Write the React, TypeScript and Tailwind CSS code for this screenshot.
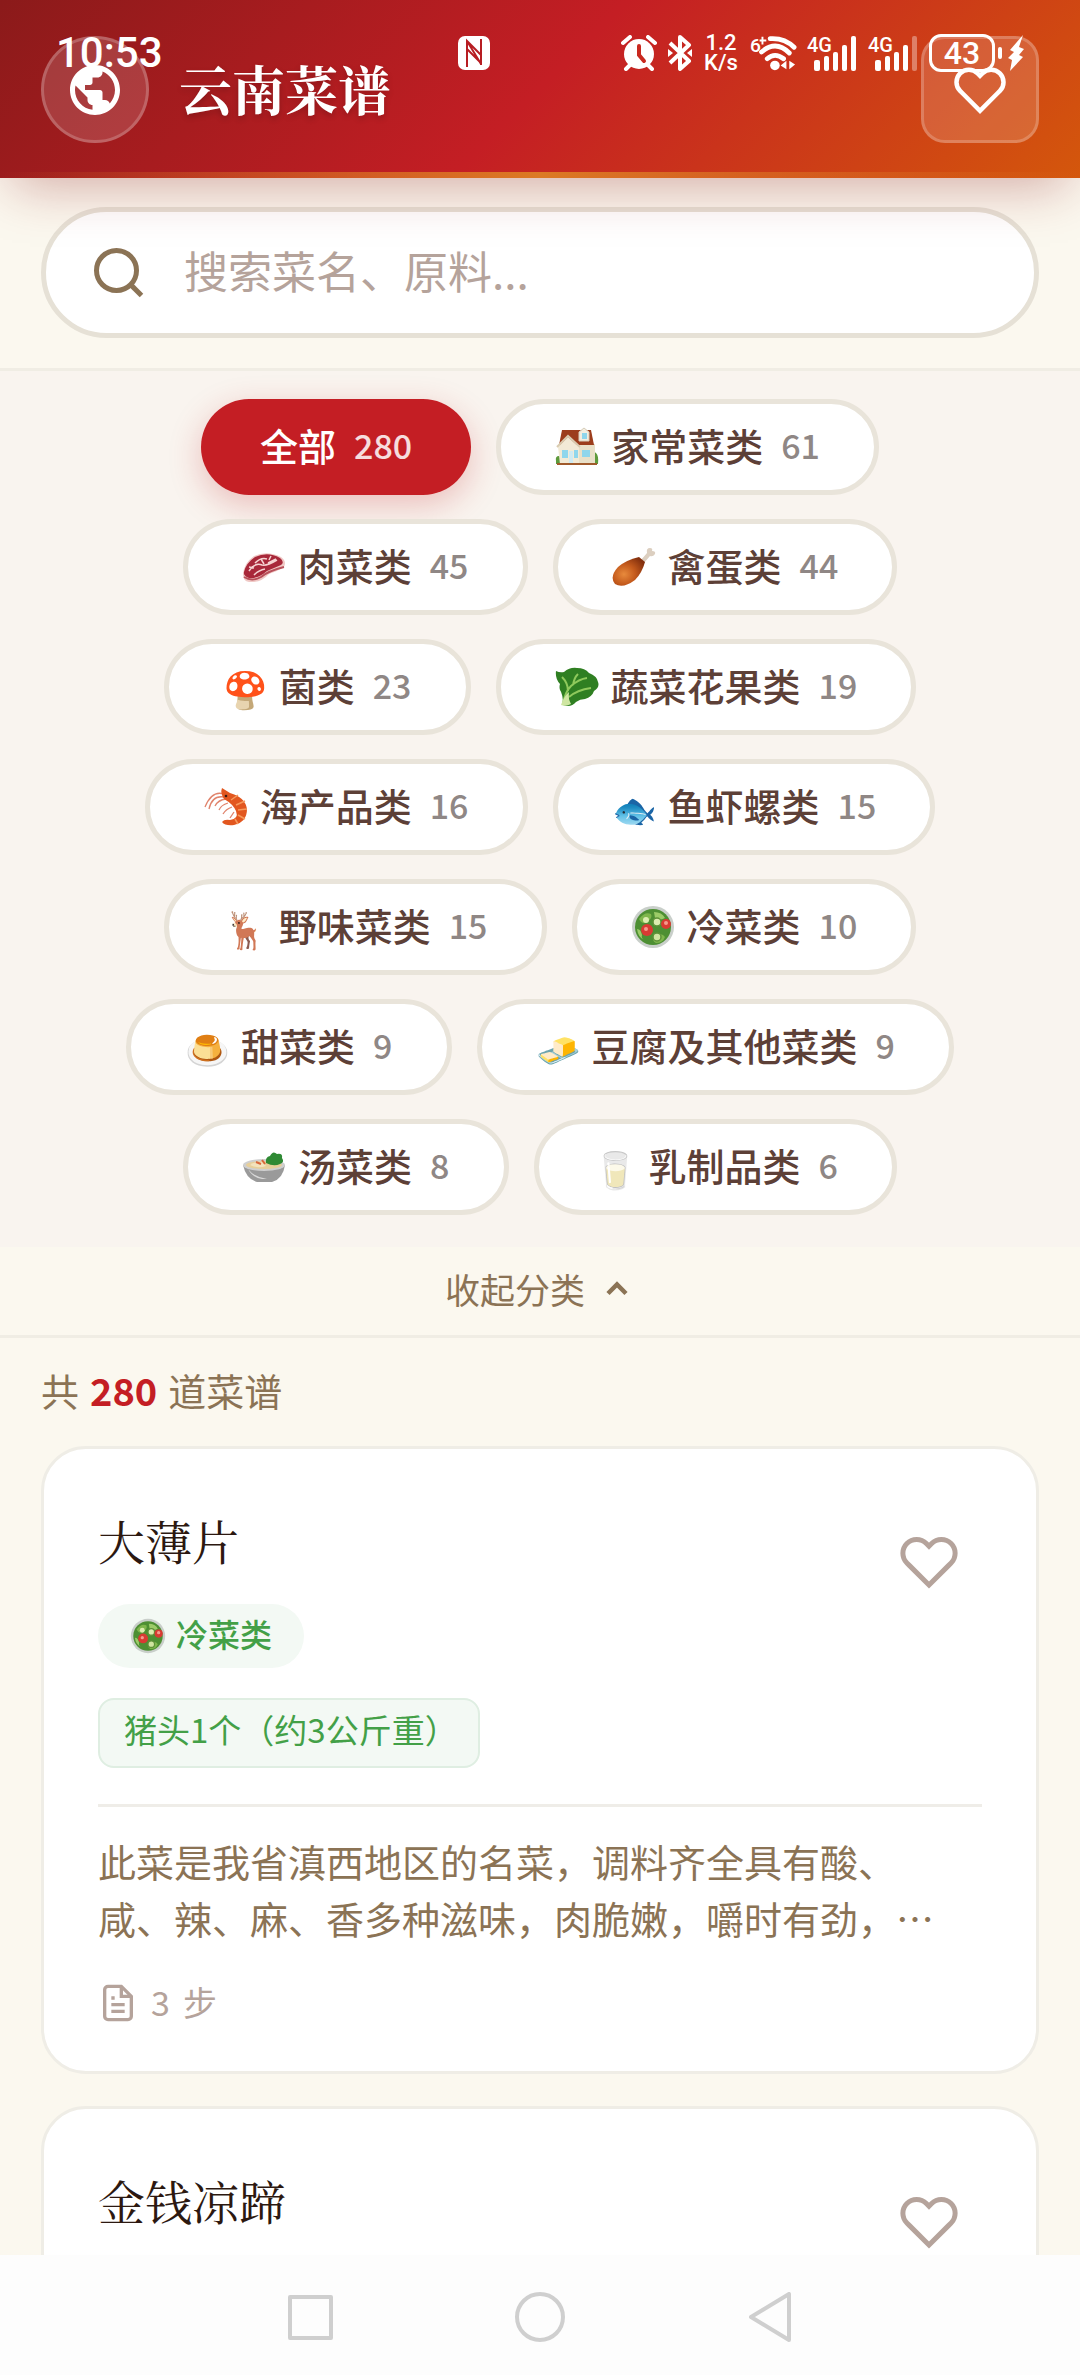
import type { ReactNode } from 'react';
import { MdPublic } from 'react-icons/md';

function HouseArt() {
  return (
    <svg viewBox="0 0 44 40" className="h-10 w-11" aria-hidden="true">
      <path d="M1 34q-1-5 3-5 2 0 3 3h30q1-9 4-6 3 3 2 11H1z" fill="#5d9a3c" />
      <rect x="6" y="17" width="34" height="20" fill="#e9e0c8" />
      <path d="M7 3h29l3 15H4z" fill="#9c3d1c" />
      <path d="M3 20L13 10l11 10v17H5z" fill="#f2ead6" />
      <path d="M2 20L13 9l12 11" fill="none" stroke="#d9cbb0" strokeWidth="2" />
      <path d="M24 14V5l5-4 5 4v9z" fill="#f4eee0" stroke="#d6ccb8" />
      <path d="M27 6h5v6h-5zM7 23h6v8H7zM19 23h4v8h-4zM27 23h8v7h-8z" fill="#8fd6ec" />
      <path d="M14 24h4v12h-4z" fill="#cfeaf2" />
      <path d="M2 36h40v2H2z" fill="#a05a2c" />
    </svg>
  );
}

function MeatArt() {
  return (
    <svg viewBox="0 0 44 40" className="h-10 w-11" aria-hidden="true">
      <path d="M1 27Q2 16 12 9 25 3 39 10q6 4 3 10-6 4-15 7-8 9-20 8-6-1-6-8z" fill="#f0c9c6" />
      <path d="M2 25Q4 16 13 10 26 4 38 11q5 4 1 7-7 3-14 6-9 8-18 7-6-2-5-6z" fill="#a8283a" />
      <path d="M7 24q6-9 13-6 5 1 15-5M12 28q5-5 11-6M13 16q6-6 12-4M26 16l8-4M7 20l5 1M19 12l3 5M29 9l-2 4" fill="none" stroke="#f6d3d2" strokeWidth="1.5" />
      <path d="M2 30q8 5 17 0 7-6 23-10" fill="none" stroke="#b8505a" strokeWidth="2" />
    </svg>
  );
}

function DrumstickArt() {
  return (
    <svg viewBox="0 0 44 40" className="h-10 w-11" aria-hidden="true">
      <defs>
        <radialGradient id="drum" cx="0.35" cy="0.6" r="0.7">
          <stop offset="0" stopColor="#e88a3c" />
          <stop offset="0.5" stopColor="#c45a1c" />
          <stop offset="1" stopColor="#84300e" />
        </radialGradient>
      </defs>
      <path d="M29 13l6-7q-1-5 3-5 3 0 2 3 4 0 3 3-2 3-5 2l-6 7z" fill="#dccfc0" />
      <path d="M3 37Q-3 30 6 20 14 13 27 10l6 5q-3 11-10 18-12 9-20 4z" fill="url(#drum)" />
    </svg>
  );
}

function GreensArt() {
  return (
    <svg viewBox="0 0 44 40" className="h-10 w-11" aria-hidden="true">
      <path d="M8 38q0-11-3-15-1-3 0-6-5-5-4-13 4 2 8 1 6-5 13-4 8 0 12 5 8 3 9 9 2 5-4 9-2 6-9 8-5 0-9 3-5 6-13 3z" fill="#2f7f22" />
      <path d="M8 37q2-12 8-18 8-7 16-8M13 24q0-8-6-14M14 30q8-7 22-9M18 18q1-7 5-11" fill="none" stroke="#8fc95c" strokeWidth="2" />
      <path d="M6 38q3-9 8-13-1 7 2 12-5 3-10 1z" fill="#cfe6a2" />
    </svg>
  );
}

function ShrimpArt() {
  return (
    <svg viewBox="0 0 44 40" className="h-10 w-11" aria-hidden="true">
      <path d="M20 7Q8 3 1 20M20 10Q8 8 5 22M22 12q-8 1-11 7M24 16q-7 2-9 7M28 20q-6 2-9 7M30 25l-4 6" fill="none" stroke="#e0836b" strokeWidth="1.3" />
      <path d="M18 1l8 5q15 4 17 16 0 13-13 16-9 1-12-3 2-3 8-2 9-1 6-9-3-7-12-12-4-6-2-11z" fill="#e2571f" />
      <path d="M27 13l7-5M32 18l9-4M34 23l9-1M34 28l7 4M31 32l3 5" fill="none" stroke="#f79a5c" strokeWidth="1.5" />
      <circle cx="22" cy="9" r="1.3" fill="#3a1a10" />
    </svg>
  );
}

function SaladArt({ className = 'h-11 w-11' }: { className?: string }) {
  return (
    <svg viewBox="0 0 44 44" className={className} aria-hidden="true">
      <circle cx="22" cy="22" r="21" fill="#c9cfca" />
      <circle cx="22" cy="22" r="18" fill="#4d8f33" />
      <path d="M8 14q6-8 12-5 2 4-4 8-5 3-8-3zM24 31q7-4 10 1-2 6-9 6-5-2-1-7z" fill="#7eb64c" />
      <path d="M23 7q8 0 11 6-6 3-10 0zM6 24q4 0 5 6-1 3 2 5-6-3-7-11z" fill="#9ccb68" />
      <circle cx="26" cy="17" r="4" fill="#dcedb0" stroke="#5d9138" strokeWidth="1.5" />
      <circle cx="26" cy="32" r="4" fill="#cfe4a0" stroke="#5d9138" strokeWidth="1.5" />
      <circle cx="15" cy="15" r="3" fill="#dcedb0" />
      <circle cx="16" cy="25" r="6" fill="#d93a33" />
      <circle cx="35" cy="19" r="5" fill="#d93a33" />
      <circle cx="15" cy="24" r="2" fill="#f59a8c" />
      <circle cx="35" cy="18" r="2" fill="#f59a8c" />
    </svg>
  );
}

function SoupArt() {
  return (
    <svg viewBox="0 0 44 40" className="h-10 w-11" aria-hidden="true">
      <path d="M1 18h42q-2 14-13 17H15Q4 32 1 18z" fill="#9a9a9a" />
      <path d="M6 22q5 9 14 10h5Q12 30 6 22z" fill="#d9d9d9" />
      <ellipse cx="22" cy="18" rx="21" ry="6" fill="#cfcfcf" />
      <ellipse cx="22" cy="18" rx="18" ry="4" fill="#e7cf9a" />
      <path d="M8 18q5-4 12-3l4 4q-8 3-16-1z" fill="#f3e3bd" />
      <path d="M14 15l5 2M20 13l3 4" stroke="#d9673a" strokeWidth="2" />
      <path d="M24 16q-1-6 4-7 3-6 7-2 6-1 5 4 3 4-2 6-6 3-14-1z" fill="#2f8a34" />
    </svg>
  );
}

function Emoji({ char }: { char: string }) {
  return <span className="w-11 text-center text-[36px] leading-none">{char}</span>;
}

type Category = { name: string; count: number; art?: ReactNode };

const categories: Category[] = [
  { name: '全部', count: 280 },
  { name: '家常菜类', count: 61, art: <HouseArt /> },
  { name: '肉菜类', count: 45, art: <MeatArt /> },
  { name: '禽蛋类', count: 44, art: <DrumstickArt /> },
  { name: '菌类', count: 23, art: <Emoji char="🍄" /> },
  { name: '蔬菜花果类', count: 19, art: <GreensArt /> },
  { name: '海产品类', count: 16, art: <ShrimpArt /> },
  { name: '鱼虾螺类', count: 15, art: <Emoji char="🐟" /> },
  { name: '野味菜类', count: 15, art: <Emoji char="🦌" /> },
  { name: '冷菜类', count: 10, art: <SaladArt /> },
  { name: '甜菜类', count: 9, art: <Emoji char="🍮" /> },
  { name: '豆腐及其他菜类', count: 9, art: <Emoji char="🧈" /> },
  { name: '汤菜类', count: 8, art: <SoupArt /> },
  { name: '乳制品类', count: 6, art: <Emoji char="🥛" /> },
];

const recipes = [
  {
    name: '大薄片',
    category: '冷菜类',
    ingredient: '猪头1个（约3公斤重）',
    description: '此菜是我省滇西地区的名菜，调料齐全具有酸、咸、辣、麻、香多种滋味，肉脆嫩，嚼时有劲，…',
    steps: 3,
  },
  { name: '金钱凉蹄' },
];

function HeartIcon({ className }: { className: string }) {
  return (
    <svg viewBox="0 0 24 24" className={className} fill="none" stroke="currentColor" strokeWidth="2" aria-hidden="true">
      <path d="M20.84 4.61a5.5 5.5 0 0 0-7.78 0L12 5.67l-1.06-1.06a5.5 5.5 0 0 0-7.78 7.78l1.06 1.06L12 21.23l7.78-7.78 1.06-1.06a5.5 5.5 0 0 0 0-7.78z" />
    </svg>
  );
}

function Signal({ weak }: { weak?: boolean }) {
  return (
    <svg viewBox="0 0 50 36" className="h-9 w-[50px] overflow-visible" fill="currentColor" aria-hidden="true">
      <text x="0" y="17" fontSize="20" fontWeight="500">4G</text>
      <rect x="7" y="25" width="6" height="11" rx="2" />
      <rect x="17" y="21" width="5" height="15" rx="2" />
      <rect x="26" y="17" width="5" height="19" rx="2" />
      <rect x="35" y="10" width="5" height="26" rx="2" />
      <rect x="44" y="1" width="5" height="35" rx="2" opacity={weak ? 0.35 : 1} />
    </svg>
  );
}

function StatusBar() {
  return (
    <div className="pointer-events-none absolute inset-x-0 top-[35px] flex h-9 items-center pr-14 pl-14 font-['Roboto',sans-serif] text-white">
      <span className="text-[42px] leading-[50px] font-medium">10:53</span>
      <svg viewBox="0 0 32 34" className="ml-[295px] h-[34px] w-8" aria-hidden="true">
        <rect width="32" height="34" rx="7" fill="currentColor" />
        <path d="M9 31V5l14 14M9 13l14 14M23 3v26M9 5l14 23" fill="none" stroke="#b71d22" strokeWidth="2" />
      </svg>
      <div className="ml-auto flex items-center gap-[11px]">
        <svg viewBox="0 0 36 36" className="h-9 w-9" fill="none" stroke="currentColor" aria-hidden="true">
          <circle cx="18" cy="19" r="15" fill="currentColor" stroke="none" />
          <path d="M2 8l7-6M34 8l-7-6M5 34l5-5M31 34l-5-5" strokeWidth="4" strokeLinecap="round" />
          <path d="M18 11v9l5 6" stroke="#c9291f" strokeWidth="4" strokeLinecap="round" />
        </svg>
        <svg viewBox="0 0 24 36" className="h-9 w-6" fill="none" stroke="currentColor" strokeWidth="4" aria-hidden="true">
          <path d="M2 8l19 18-9 8V2l9 8L2 28" strokeLinejoin="round" />
          <path d="M0 14l5 4-5 4zM24 14l-5 4 5 4z" fill="currentColor" stroke="none" />
        </svg>
        <p className="w-9 text-center text-[22px] leading-5 font-medium">
          1.2
          <br />
          K/s
        </p>
        <svg viewBox="0 0 48 36" className="h-9 w-[46px] overflow-visible" fill="none" stroke="currentColor" aria-hidden="true">
          <text x="0" y="17" fontSize="20" fontWeight="500" fill="currentColor" stroke="none">6</text>
          <path d="M10 5h7M13 1v8" strokeWidth="2" />
          <path d="M21 3q15-1 25 9M12 17q15-13 29 1M18 24q8-7 17 0" strokeWidth="5" strokeLinecap="round" />
          <circle cx="26" cy="31" r="5" fill="currentColor" stroke="none" />
          <path d="M38 26v9l-6-4zM41 26v9l6-5z" fill="currentColor" stroke="none" />
        </svg>
        <Signal />
        <Signal weak />
        <div className="flex items-center gap-1.5">
          <div className="flex items-center gap-[3px]">
            <span className="flex h-[38px] w-[66px] items-center justify-center rounded-xl border-[3px] border-white text-[32px] leading-none font-medium">
              43
            </span>
            <span className="h-3 w-1 rounded-sm bg-white" />
          </div>
          <svg viewBox="0 0 16 36" className="h-9 w-4" fill="currentColor" aria-hidden="true">
            <path d="M15 0L2 15l4 2-6 6 4 2-2 11 13-14-4-2 5-6-5-2z" />
          </svg>
        </div>
      </div>
    </div>
  );
}

function Header() {
  return (
    <header className="relative z-10 bg-[linear-gradient(135deg,#8b1a1a_0%,#c41e24_50%,#d4570c_100%)] shadow-[0_20px_50px_-12px_rgba(139,26,26,0.35)]">
      <div className="flex items-center px-[41px] pt-9 pb-[29px]">
        <button aria-label="语言" className="flex h-[107px] w-[108px] items-center justify-center rounded-full border-[3px] border-white/20 bg-white/15 text-white">
          <MdPublic className="h-[60px] w-[60px]" />
        </button>
        <h1 className="ml-[30px] pb-1 font-['Noto_Serif_CJK_SC','Noto_Sans_CJK_SC',serif] text-[53px] leading-[76px] font-bold text-white [text-shadow:0_3px_6px_rgba(0,0,0,0.2)]">
          云南菜谱
        </h1>
        <button aria-label="我的收藏" className="ml-auto flex h-[107px] w-[118px] items-center justify-center rounded-3xl border-[3px] border-white/20 bg-white/15 text-white">
          <HeartIcon className="h-[54px] w-[54px]" />
        </button>
      </div>
      <div className="h-1.5 bg-[linear-gradient(90deg,transparent,#dc7a24_50%,transparent)]" />
      <StatusBar />
    </header>
  );
}

function CategoryChip({ category, active }: { category: Category; active: boolean }) {
  return (
    <button
      aria-pressed={active}
      className={
        active
          ? "flex h-24 items-center rounded-full bg-[#c41e24] px-[59px] font-['Noto_Sans_CJK_SC_Medium','Noto_Sans_CJK_SC',sans-serif] text-white shadow-[0_10px_32px_rgba(196,30,36,0.25)]"
          : "flex h-24 items-center rounded-full border-[5px] border-[#e9e4da] bg-white px-[54px] font-['Noto_Sans_CJK_SC_Medium','Noto_Sans_CJK_SC',sans-serif] text-[#5d4037]"
      }
    >
      {category.art && <span className="mr-3 flex">{category.art}</span>}
      <span className="pb-1 text-[38px] leading-[56px]">{category.name}</span>
      <span className={active ? 'ml-[18px] pb-1.5 text-[34px] text-white/85' : 'ml-[18px] pb-1.5 text-[34px] text-[#8f8785]'}>{category.count}</span>
    </button>
  );
}

function RecipeCard({ recipe }: { recipe: (typeof recipes)[number] }) {
  return (
    <article className="rounded-[45px] border-[3px] border-[#efede6] bg-white px-[54px] pt-[53px] pb-11">
      <div className="flex items-start justify-between">
        <div>
          <h2 className="mb-[26px] font-['Noto_Serif_CJK_SC','Noto_Sans_CJK_SC',serif] text-[47px] leading-[76px] text-[#2c1810]">{recipe.name}</h2>
          {recipe.category && (
            <span className="flex h-16 w-fit items-center gap-2.5 rounded-full bg-[#f3f9f4] px-8 font-['Noto_Sans_CJK_SC_Medium','Noto_Sans_CJK_SC',sans-serif] text-[32px] text-[#43a047]">
              <SaladArt className="h-9 w-9" />
              <span className="pb-1.5">{recipe.category}</span>
            </span>
          )}
        </div>
        <button aria-label="收藏" className="flex h-[120px] w-[106px] items-center justify-center text-[#b5a39b]">
          <HeartIcon className="h-[60px] w-[60px]" />
        </button>
      </div>
      {recipe.ingredient && (
        <span className="mt-[30px] flex h-[70px] w-fit items-center rounded-2xl border-2 border-[#dfeee2] bg-[#f3f9f4] pr-5 pb-1.5 pl-6 text-[33px] text-[#43a047]">
          {recipe.ingredient}
        </span>
      )}
      {recipe.description && (
        <div className="mt-9 border-t-[3px] border-[#efede8] pt-[25px] pr-4">
          <p className="line-clamp-2 text-[38px] leading-[57px] text-[#8b7355]">{recipe.description}</p>
        </div>
      )}
      {recipe.steps && (
        <div className="mt-[33px] flex h-12 items-center gap-[13px] text-[34px] text-[#b5a39b]">
          <svg viewBox="0 0 24 24" className="h-10 w-10" fill="none" stroke="currentColor" strokeWidth="2" aria-hidden="true">
            <path d="M14 2H6a2 2 0 0 0-2 2v16a2 2 0 0 0 2 2h12a2 2 0 0 0 2-2V8z" />
            <path d="M14 2v6h6M16 13H8M16 17H8M10 9H8" />
          </svg>
          <span className="pb-1">{recipe.steps}</span>
          <span className="pb-1">步</span>
        </div>
      )}
    </article>
  );
}

function SystemNav() {
  return (
    <nav className="relative z-10 flex h-[120px] shrink-0 items-center justify-center gap-[170px] bg-[#fdfdfd] pt-1 text-[#cfcfcf]">
      <button aria-label="最近任务" className="flex h-[60px] w-[60px] items-center justify-center">
        <span className="h-[45px] w-[45px] rounded-xs border-4 border-current" />
      </button>
      <button aria-label="主屏幕" className="flex h-[60px] w-[60px] items-center justify-center">
        <span className="h-[50px] w-[50px] rounded-full border-4 border-current" />
      </button>
      <button aria-label="返回" className="flex h-[60px] w-[60px] items-center justify-center">
        <svg viewBox="0 0 44 50" className="h-[50px] w-11" fill="none" stroke="currentColor" strokeWidth="4" strokeLinejoin="round">
          <path d="M41 2v46L3 25z" />
        </svg>
      </button>
    </nav>
  );
}

export default function App() {
  return (
    <div className="flex h-screen flex-col overflow-hidden bg-[#fbf8ef] font-['Noto_Sans_CJK_SC',sans-serif]">
      <Header />
      <main className="min-h-0 flex-1 overflow-hidden">
        <section className="border-b-[3px] border-[#f0ede4] px-[41px] pt-[29px] pb-[30px]">
          <label className="flex h-[131px] items-center gap-[35px] rounded-full border-[5px] border-[#e6e1d6] bg-white px-[43px]">
            <svg viewBox="0 0 24 24" className="h-[60px] w-[60px] shrink-0 text-[#8b7355]" fill="none" stroke="currentColor" strokeWidth="2" aria-hidden="true">
              <circle cx="11" cy="11" r="8" />
              <path d="M21 21l-4.35-4.35" />
            </svg>
            <input
              type="text"
              aria-label="搜索"
              placeholder="搜索菜名、原料..."
              className="min-w-0 flex-1 bg-transparent pb-1.5 text-[44px] leading-[64px] text-[#5d4037] outline-none placeholder:text-[#b5a39b]"
            />
          </label>
        </section>

        <section className="flex flex-wrap justify-center gap-x-[25px] gap-y-6 bg-[#f9f4ef] px-[41px] pt-7 pb-8">
          {categories.map((category, i) => (
            <CategoryChip key={category.name} category={category} active={i === 0} />
          ))}
        </section>

        <button className="flex h-[91px] w-full items-center justify-center gap-3.5 border-b-[3px] border-[#f0ede4] pb-1 text-[35px] text-[#8b7355]">
          收起分类
          <svg viewBox="0 0 24 24" className="h-9 w-9" fill="none" stroke="currentColor" strokeWidth="3" aria-hidden="true">
            <path d="M18 15l-6-6-6 6" />
          </svg>
        </button>

        <section className="px-[41px]">
          <p className="flex gap-[11px] pt-6 pb-7 text-[38px] leading-[56px] text-[#8b7355]">
            <span>共</span>
            <strong className="font-bold text-[#c41e24]">280</strong>
            <span>道菜谱</span>
          </p>
          <div className="flex flex-col gap-8">
            {recipes.map((recipe) => (
              <RecipeCard key={recipe.name} recipe={recipe} />
            ))}
          </div>
        </section>
      </main>
      <SystemNav />
    </div>
  );
}
